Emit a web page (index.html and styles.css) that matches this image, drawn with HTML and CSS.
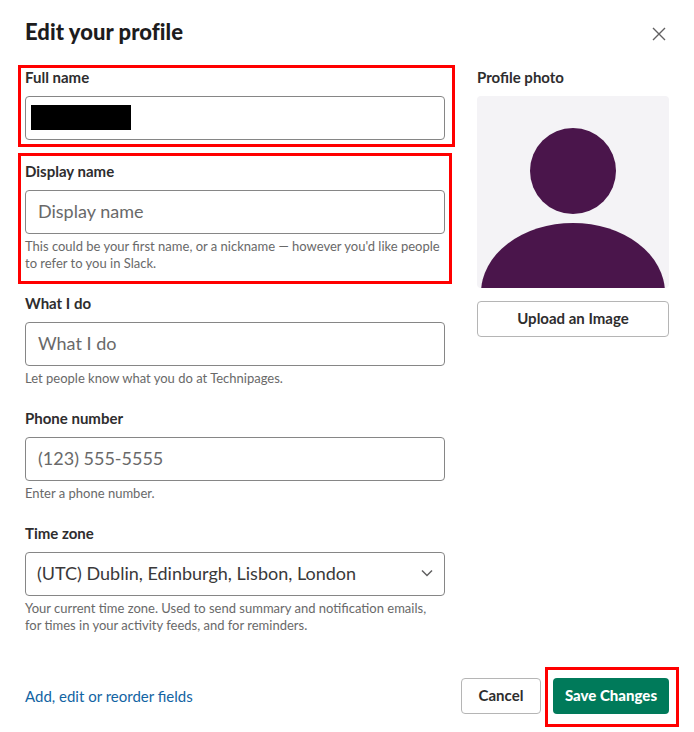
FILE: index.html
```html
<!DOCTYPE html>
<html lang="en">
<head>
  <meta charset="UTF-8" />
  <title>Edit your profile</title>
  <link rel="stylesheet" href="styles.css">
</head>
<body>
  <div class="modal">
    <div class="header">
      <h1>Edit your profile</h1>
      <button class="close" aria-label="Close">
        <svg width="14" height="14" viewBox="0 0 14 14"><path d="M1 1l12 12M13 1L1 13" stroke="#616061" stroke-width="1.4" fill="none"/></svg>
      </button>
    </div>

    <div class="body">
      <div class="fields">
        <div class="field">
          <label>Full name</label>
          <div class="input"><span class="redacted"></span></div>
        </div>
        <div class="field">
          <label>Display name</label>
          <div class="input placeholder">Display name</div>
          <p class="hint">This could be your first name, or a nickname — however you'd like people to refer to you in Slack.</p>
        </div>
        <div class="field">
          <label>What I do</label>
          <div class="input placeholder">What I do</div>
          <p class="hint">Let people know what you do at Technipages.</p>
        </div>
        <div class="field">
          <label>Phone number</label>
          <div class="input placeholder">(123) 555-5555</div>
          <p class="hint">Enter a phone number.</p>
        </div>
        <div class="field">
          <label>Time zone</label>
          <div class="input select">
            <span>(UTC) Dublin, Edinburgh, Lisbon, London</span>
            <svg width="12" height="8" viewBox="0 0 12 8"><path d="M1 1.5l5 5 5-5" stroke="#616061" stroke-width="1.5" fill="none"/></svg>
          </div>
          <p class="hint">Your current time zone. Used to send summary and notification emails, for times in your activity feeds, and for reminders.</p>
        </div>
      </div>

      <div class="photo-col">
        <label>Profile photo</label>
        <div class="photo">
          <svg width="192" height="192" viewBox="0 0 192 192">
            <circle cx="96" cy="75" r="43" fill="#4a154b"/>
            <ellipse cx="96" cy="197" rx="92" ry="70" fill="#4a154b"/>
          </svg>
        </div>
        <button class="btn upload">Upload an Image</button>
      </div>
    </div>

    <div class="footer">
      <a href="#">Add, edit or reorder fields</a>
      <div class="actions">
        <button class="btn cancel">Cancel</button>
        <button class="btn save">Save Changes</button>
      </div>
    </div>
  </div>

  <!-- red highlights added on top of the screenshot -->
  <div class="mark mark-full"></div>
  <div class="mark mark-display"></div>
  <div class="mark mark-save"></div>
</body>
</html>
```

FILE: styles.css
```css
* {
  box-sizing: border-box;
}
body {
  margin: 0;
  background-color: white;
  font-family: Lato, sans-serif;
  color: #1d1c1d;
}
.modal {
  width: 694px;
  height: 732px;
  padding: 0 25px;
}
.header {
  height: 66px;
  display: flex;
  align-items: center;
  justify-content: space-between;
  padding-bottom: 4px;
}
h1 {
  margin: 0 0 -2px;
  font-size: 22px;
  font-weight: 900;
  line-height: 30px;
  letter-spacing: 0.05px;
}
.close {
  border: none;
  background: none;
  padding: 0;
  margin: 6px 3px 0 0;
  display: flex;
}
.body {
  display: flex;
  gap: 32px;
}
.fields {
  width: 420px;
  display: flex;
  flex-direction: column;
  gap: 20px;
}
label {
  display: block;
  font-size: 15px;
  font-weight: 700;
  line-height: 22px;
  margin-bottom: 8px;
  color: #2e2d2e;
}
.input {
  height: 44px;
  border: 1px solid #868686;
  border-radius: 4px;
  padding: 0 12px 2px;
  display: flex;
  align-items: center;
  font-size: 18px;
}
.placeholder {
  color: #696969;
}
.redacted {
  width: 100px;
  height: 25px;
  margin-left: -7px;
  background-color: black;
}
.select {
  justify-content: space-between;
  padding: 0 11px 2px;
  color: #3a393a;
}
.hint {
  margin: 4px 0 0;
  font-size: 13px;
  line-height: 17px;
  color: #696969;
}
.photo-col {
  width: 192px;
}
.photo {
  height: 192px;
  border-radius: 4px;
  background-color: #f4f3f6;
  overflow: hidden;
}
.photo svg {
  display: block;
}
.btn {
  height: 36px;
  border-radius: 4px;
  padding: 0 0 2px;
  font-family: inherit;
  font-size: 15px;
  font-weight: 700;
  cursor: pointer;
}
.upload,
.cancel {
  background-color: white;
  border: 1px solid #b5b5b5;
  color: #2e2d2e;
}
.upload {
  width: 100%;
  margin-top: 13px;
}
.footer {
  display: flex;
  align-items: center;
  justify-content: space-between;
  margin-top: 44px;
}
.footer a {
  color: #1264a3;
  font-size: 15px;
  text-decoration: none;
}
.actions {
  display: flex;
  gap: 12px;
}
.cancel {
  width: 80px;
}
.save {
  width: 116px;
  background-color: #007a5a;
  border: none;
  color: white;
  font-weight: 900;
}
.mark {
  position: absolute;
  border: 3px solid #ff0000;
}
.mark-full {
  left: 18px;
  top: 65px;
  width: 437px;
  height: 82px;
}
.mark-display {
  left: 18px;
  top: 153px;
  width: 434px;
  height: 131px;
}
.mark-save {
  left: 545px;
  top: 667px;
  width: 134px;
  height: 60px;
}
```
